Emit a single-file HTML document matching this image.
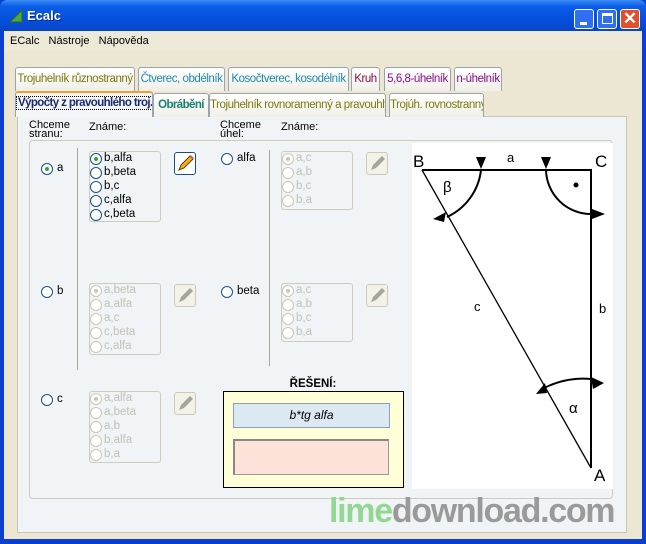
<!DOCTYPE html>
<html><head><meta charset="utf-8"><style>
*{margin:0;padding:0;box-sizing:border-box}
body{width:646px;height:544px;position:relative;overflow:hidden;background:#0a3fd0;font-family:"Liberation Sans",sans-serif;font-size:11px}
.a{position:absolute}
.title{left:0;top:0;width:646px;height:31px;background:linear-gradient(#3d8cf5,#0a5ee8 20%,#0550dc 60%,#0846c8);border-radius:7px 7px 0 0}
.win{left:4px;top:31px;width:638px;height:508px;background:#ebe7d3}
.tab{position:absolute;height:24px;border:1px solid #9aa3ae;border-bottom:none;border-radius:3px 3px 0 0;background:linear-gradient(#fff,#f0efe8);font-size:11.5px;letter-spacing:-0.45px;padding-top:5px;text-align:center;white-space:nowrap;overflow:hidden}
.rad{position:absolute;width:12px;height:12px;border:1px solid #1c5180;border-radius:50%;background:#fff}
.rad.on::after{content:"";position:absolute;left:3px;top:3px;width:4px;height:4px;border-radius:50%;background:#2fa52f}
.dis{border-color:#cbc7b8}
.dis.on::after{background:#c8c5b8}
.box{position:absolute;border:1px solid #d0ccba;border-radius:3px}
.lbl{position:absolute;font-size:11.5px}
.pen{position:absolute;width:22px;height:23px;border:1px solid #cfcab5;border-radius:3px;background:#f3f1e8}
</style></head><body>
<div class="a title"></div>
<svg class="a" style="left:9px;top:9px" width="14" height="14"><polygon points="1,13 13,1 13,13" fill="#4caa3c" stroke="#2a6a20"/></svg>
<div class="a" style="left:27px;top:8px;color:#fff;font-weight:bold;font-size:13px;text-shadow:1px 1px #0a2a90">Ecalc</div>
<div class="a" style="left:574px;top:9px;width:20px;height:20px;border:1px solid #fff;border-radius:3px;background:#2f6ff0"><div class="a" style="left:5px;top:12px;width:7px;height:3px;background:#fff"></div></div>
<div class="a" style="left:597px;top:9px;width:20px;height:20px;border:1px solid #fff;border-radius:3px;background:#2f6ff0"><div class="a" style="left:4px;top:3px;width:11px;height:11px;border:1px solid #fff;border-top-width:3px"></div></div>
<div class="a" style="left:620px;top:9px;width:20px;height:20px;border:1px solid #fff;border-radius:3px;background:#e0502a;color:#fff;font-weight:bold;font-size:17px;line-height:18px;text-align:center">✕</div>
<div class="a win"></div>
<div class="a" style="left:4px;top:31px;width:638px;height:19px;background:#ece9d8"></div>
<div class="a" style="left:10px;top:35px;font-size:11px">ECalc&nbsp;&nbsp;&nbsp;Nástroje&nbsp;&nbsp;&nbsp;Nápověda</div>
<div class="a" style="left:17px;top:116px;width:610px;height:417px;background:#f1f4f6;border:1px solid #c8c6b8"></div>
<!-- tabs row 1 -->
<div class="tab" style="left:15px;top:67px;width:120px;color:#7a7a10">Trojuhelník různostranný</div>
<div class="tab" style="left:138px;top:67px;width:87px;color:#1d8ab0">Čtverec, obdélník</div>
<div class="tab" style="left:228px;top:67px;width:121px;color:#1d8ab0">Kosočtverec, kosodélník</div>
<div class="tab" style="left:351px;top:67px;width:29px;color:#8a1050">Kruh</div>
<div class="tab" style="left:384px;top:67px;width:67px;color:#8a1090">5,6,8-úhelník</div>
<div class="tab" style="left:454px;top:67px;width:48px;color:#8a1090">n-úhelník</div>
<!-- row 2 -->
<div class="tab" style="left:15px;top:91px;width:138px;height:26px;background:#f4f6f8;border-top:2px solid #f0a030;color:#1a2a70;font-weight:bold;letter-spacing:-0.6px;padding-top:4px"><span style="border:1px dotted #000;padding:0 1px">Výpočty z pravouhlého troj.</span></div>
<div class="tab" style="left:153px;top:93px;width:56px;color:#1a8070;font-weight:bold;letter-spacing:-0.6px">Obrábění</div>
<div class="tab" style="left:209px;top:93px;width:177px;color:#7a7a10">Trojuhelník rovnoramenný a pravouhlý</div>
<div class="tab" style="left:389px;top:93px;width:95px;color:#7a7a10">Trojúh. rovnostranný</div>
<!-- headings -->
<div class="a" style="left:29px;top:121px;font-size:11px;line-height:9px">Chceme<br>stranu:</div>
<div class="a" style="left:89px;top:121px;font-size:11px">Známe:</div>
<div class="a" style="left:220px;top:121px;font-size:11px;line-height:9px">Chceme<br>úhel:</div>
<div class="a" style="left:281px;top:121px;font-size:11px">Známe:</div>
<div class="box" style="left:29px;top:140px;width:584px;height:359px;border-radius:4px"></div>
<div class="a" style="left:77px;top:148px;width:1px;height:222px;background:#a8a8a0"></div>
<div class="a" style="left:269px;top:150px;width:1px;height:216px;background:#a8a8a0"></div>
<!-- row a -->
<div class="rad on" style="left:41px;top:163px"></div><div class="lbl" style="left:57px;top:162px">a</div>
<div class="box" style="left:89px;top:151px;width:72px;height:71px"></div>
<div class="rad on" style="left:90px;top:153px"></div><div class="lbl" style="left:104px;top:152px">b,alfa</div>
<div class="rad" style="left:90px;top:167px"></div><div class="lbl" style="left:104px;top:166px">b,beta</div>
<div class="rad" style="left:90px;top:181px"></div><div class="lbl" style="left:104px;top:180px">b,c</div>
<div class="rad" style="left:90px;top:195px"></div><div class="lbl" style="left:104px;top:194px">c,alfa</div>
<div class="rad" style="left:90px;top:209px"></div><div class="lbl" style="left:104px;top:208px">c,beta</div>
<div class="pen" style="left:174px;top:152px;border-color:#1c4c88;background:#fff"><svg width="20" height="21"><polygon points="4,17 6,12 15,3 18,6 9,15" fill="#f0b020" stroke="#604000"/><polygon points="15,3 18,6 19,5 16,2" fill="#e07080"/></svg></div>
<div class="rad" style="left:221px;top:153px"></div><div class="lbl" style="left:237px;top:152px">alfa</div>
<div class="box" style="left:281px;top:151px;width:72px;height:59px"></div>
<div class="rad dis on" style="left:282px;top:153px"></div><div class="lbl" style="left:296px;top:152px;color:#c2c0b6">a,c</div>
<div class="rad dis" style="left:282px;top:167px"></div><div class="lbl" style="left:296px;top:166px;color:#c2c0b6">a,b</div>
<div class="rad dis" style="left:282px;top:181px"></div><div class="lbl" style="left:296px;top:180px;color:#c2c0b6">b,c</div>
<div class="rad dis" style="left:282px;top:195px"></div><div class="lbl" style="left:296px;top:194px;color:#c2c0b6">b,a</div>
<div class="pen" style="left:366px;top:152px"><svg width="20" height="21"><polygon points="4,17 6,12 15,3 18,6 9,15" fill="#a8a498"/></svg></div>
<!-- row b -->
<div class="rad" style="left:41px;top:286px"></div><div class="lbl" style="left:57px;top:285px">b</div>
<div class="box" style="left:89px;top:283px;width:72px;height:72px"></div>
<div class="rad dis on" style="left:90px;top:285px"></div><div class="lbl" style="left:104px;top:284px;color:#c2c0b6">a,beta</div>
<div class="rad dis" style="left:90px;top:299px"></div><div class="lbl" style="left:104px;top:298px;color:#c2c0b6">a,alfa</div>
<div class="rad dis" style="left:90px;top:313px"></div><div class="lbl" style="left:104px;top:312px;color:#c2c0b6">a,c</div>
<div class="rad dis" style="left:90px;top:327px"></div><div class="lbl" style="left:104px;top:326px;color:#c2c0b6">c,beta</div>
<div class="rad dis" style="left:90px;top:341px"></div><div class="lbl" style="left:104px;top:340px;color:#c2c0b6">c,alfa</div>
<div class="pen" style="left:174px;top:284px"><svg width="20" height="21"><polygon points="4,17 6,12 15,3 18,6 9,15" fill="#a8a498"/></svg></div>
<div class="rad" style="left:221px;top:286px"></div><div class="lbl" style="left:237px;top:285px">beta</div>
<div class="box" style="left:281px;top:283px;width:72px;height:59px"></div>
<div class="rad dis on" style="left:282px;top:285px"></div><div class="lbl" style="left:296px;top:284px;color:#c2c0b6">a,c</div>
<div class="rad dis" style="left:282px;top:299px"></div><div class="lbl" style="left:296px;top:298px;color:#c2c0b6">a,b</div>
<div class="rad dis" style="left:282px;top:313px"></div><div class="lbl" style="left:296px;top:312px;color:#c2c0b6">b,c</div>
<div class="rad dis" style="left:282px;top:327px"></div><div class="lbl" style="left:296px;top:326px;color:#c2c0b6">b,a</div>
<div class="pen" style="left:366px;top:284px"><svg width="20" height="21"><polygon points="4,17 6,12 15,3 18,6 9,15" fill="#a8a498"/></svg></div>
<!-- row c -->
<div class="rad" style="left:41px;top:394px"></div><div class="lbl" style="left:57px;top:393px">c</div>
<div class="box" style="left:89px;top:391px;width:72px;height:72px"></div>
<div class="rad dis on" style="left:90px;top:393px"></div><div class="lbl" style="left:104px;top:392px;color:#c2c0b6">a,alfa</div>
<div class="rad dis" style="left:90px;top:407px"></div><div class="lbl" style="left:104px;top:406px;color:#c2c0b6">a,beta</div>
<div class="rad dis" style="left:90px;top:421px"></div><div class="lbl" style="left:104px;top:420px;color:#c2c0b6">a,b</div>
<div class="rad dis" style="left:90px;top:435px"></div><div class="lbl" style="left:104px;top:434px;color:#c2c0b6">b,alfa</div>
<div class="rad dis" style="left:90px;top:449px"></div><div class="lbl" style="left:104px;top:448px;color:#c2c0b6">b,a</div>
<div class="pen" style="left:174px;top:392px"><svg width="20" height="21"><polygon points="4,17 6,12 15,3 18,6 9,15" fill="#a8a498"/></svg></div>
<!-- solution -->
<div class="a" style="left:223px;top:378px;width:180px;text-align:center;font-weight:bold;font-size:11.5px">ŘEŠENÍ:</div>
<div class="a" style="left:223px;top:391px;width:181px;height:97px;background:#ffffd8;border:1px solid #000"></div>
<div class="a" style="left:233px;top:403px;width:157px;height:25px;background:#dce9f2;border:1px solid #8aa0b8;text-align:center;font-style:italic;font-size:12px;line-height:22px">b*tg alfa</div>
<div class="a" style="left:233px;top:439px;width:156px;height:36px;background:#fde2da;border:1px solid #999;border-top:2px solid #888;border-left:2px solid #888"></div>
<!-- triangle -->
<svg class="a" style="left:412px;top:143px" width="201" height="346">
<rect width="201" height="346" fill="#fff"/>
<g stroke="#000" stroke-width="2" fill="none" transform="translate(-412,-143)">
<polyline points="422,170 591,170 591,468"/>
<line x1="422" y1="170" x2="591" y2="468" stroke-width="1.3"/>
<path d="M481,170 A59,59 0 0 1 447,217"/>
<path d="M546,170 A45,45 0 0 0 591,214"/>
<path d="M591,379 A89,89 0 0 0 544,388"/>
</g>
<g fill="#000" transform="translate(-412,-143)">
<polygon points="476,157 486,157 481,169"/>
<polygon points="541,157 551,157 546,169"/>
<polygon points="433,219 446,212 444,222"/>
<polygon points="605,214 592,209 592,219"/>
<polygon points="604,383 591,377 593,389"/>
<polygon points="536,394 545,383 547,393"/>
<circle cx="576" cy="185" r="2.5"/>
</g>
<g font-family="Liberation Sans,sans-serif" transform="translate(-412,-143)">
<text x="413" y="167" font-size="17">B</text>
<text x="595" y="167" font-size="17">C</text>
<text x="594" y="481" font-size="17">A</text>
<text x="507" y="162" font-size="13">a</text>
<text x="599" y="313" font-size="13">b</text>
<text x="474" y="311" font-size="13">c</text>
<text x="443" y="192" font-size="15">β</text>
<text x="569" y="413" font-size="15">α</text>
</g>
</svg>
<div class="a" style="left:329px;top:492px;font-size:34px;font-weight:bold;letter-spacing:-1.3px;white-space:nowrap"><span style="color:#92d892">lime</span><span style="color:#9a9a9a">download.com</span></div>
</body></html>
